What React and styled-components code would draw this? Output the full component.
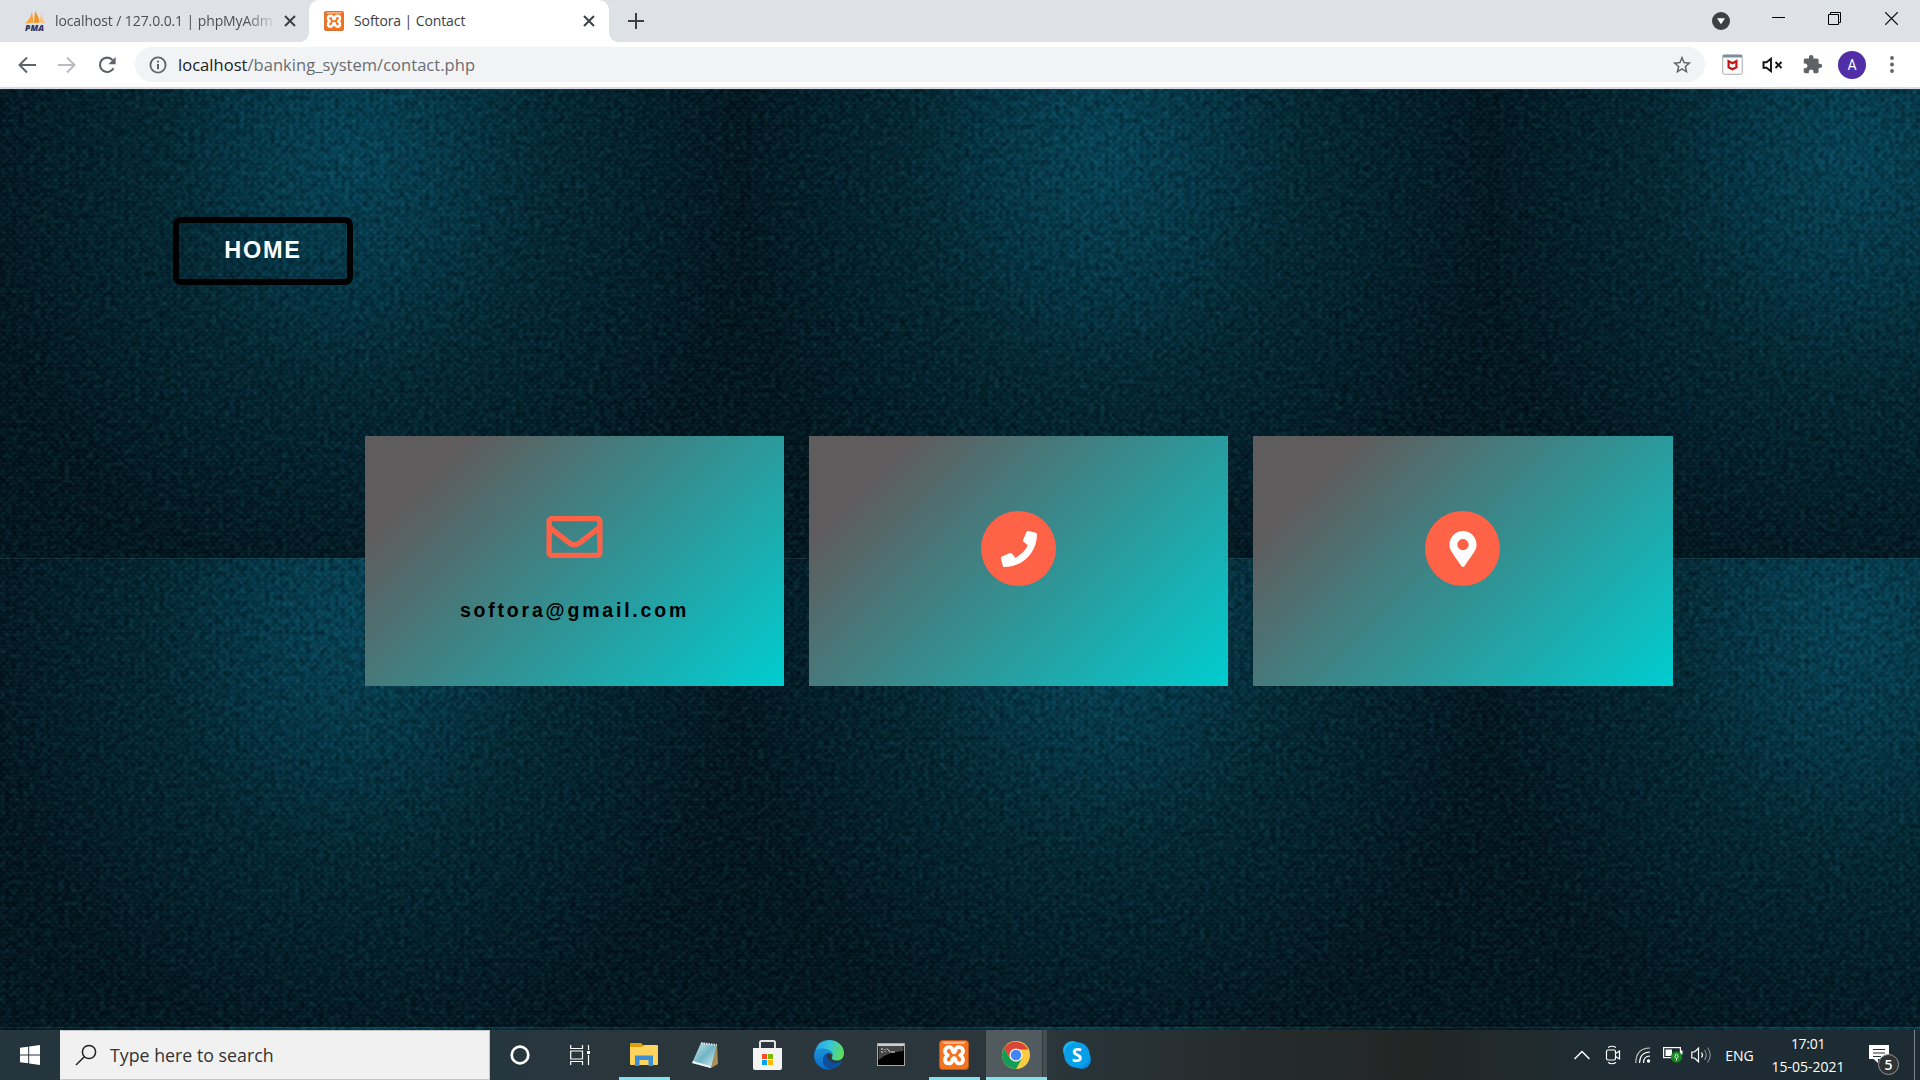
import React from "react";
import styled, { createGlobalStyle } from "styled-components";
import { FaRegEnvelope, FaPhone, FaMapMarkerAlt } from "react-icons/fa";
import { MdExtension, MdStarBorder } from "react-icons/md";

const Global = createGlobalStyle`
  * { box-sizing: border-box; }
  html, body { margin: 0; padding: 0; overflow: hidden; }
  body { font-family: "Open Sans", "Noto Sans", sans-serif; }
  svg { display: block; flex: none; }
`;

const Screen = styled.div`
  display: flex;
  flex-direction: column;
  width: 1920px;
  height: 1080px;
  overflow: hidden;
`;

/* ---------- browser ---------- */
const TabStrip = styled.div`
  display: flex;
  height: 42px;
  background: #dee1e6;
`;
const Tab = styled.div`
  display: flex;
  align-items: center;
  width: ${(p) => p.$width}px;
  padding: 0 ${(p) => p.$right}px 0 ${(p) => p.$left}px;
  color: ${(p) => (p.$active ? "#3c4043" : "#4b4f54")};
  background: ${(p) => (p.$active ? "#fff" : "transparent")};
  border-radius: 10px 10px 0 0;
  position: relative;
  &::before, &::after {
    content: "";
    display: ${(p) => (p.$active ? "block" : "none")};
    position: absolute;
    bottom: 0;
    width: 9px;
    height: 9px;
  }
  &::before { left: -9px; background: radial-gradient(circle at 0 0, transparent 8.5px, #fff 9px); }
  &::after { right: -9px; background: radial-gradient(circle at 100% 0, transparent 8.5px, #fff 9px); }
`;
const TabTitle = styled.div`
  width: ${(p) => p.$width}px;
  margin: 0 auto 1px 10px;
  white-space: nowrap;
  font-size: 14px;
  line-height: 22px;
  letter-spacing: -0.1px;
  ${(p) => p.$fade && "mask-image: linear-gradient(90deg, #000 190px, transparent 222px);"}
`;
const NewTab = styled.div`
  display: flex;
  align-items: center;
  justify-content: center;
  width: 54px;
`;
const WindowButtons = styled.div`
  display: flex;
  margin-left: auto;
`;
const WindowButton = styled.div`
  display: flex;
  justify-content: center;
  width: 56.6px;
  padding: ${(p) => p.$top}px 1px 0 0;
`;
const Toolbar = styled.div`
  display: flex;
  align-items: center;
  height: 47px;
  padding: 0 8px 0 7px;
  background: #fff;
  border-bottom: 2px solid #d9dbde;
`;
const ToolButton = styled.div`
  display: flex;
  align-items: center;
  justify-content: center;
  width: 40px;
  height: 40px;
`;
const Omnibox = styled.div`
  display: flex;
  align-items: center;
  flex: 1;
  height: 35px;
  margin: 0 7px 0 8px;
  padding: 0 12px 0 14px;
  border-radius: 18px;
  background: #f1f3f4;
`;
const Url = styled.div`
  flex: 1;
  padding-left: 11px;
  font-size: 16.5px;
  line-height: 24px;
  letter-spacing: 0.04px;
  color: #696d72;
  b { font-weight: 400; color: #202124; }
`;
const Avatar = styled.div`
  display: flex;
  align-items: center;
  justify-content: center;
  width: 28px;
  height: 28px;
  border-radius: 50%;
  background: #512da8;
  color: #fff;
  font: 14px Roboto, sans-serif;
`;

/* ---------- page ---------- */
const Page = styled.main`
  position: relative;
  isolation: isolate;
  height: 941px;
  padding-top: 128px;
  background-color: #01141c;
  background-image:
    radial-gradient(ellipse 2.6px 1.7px at 50% 50%, rgba(90, 190, 205, 0.1), transparent),
    radial-gradient(ellipse 2.6px 1.7px at 50% 50%, rgba(90, 190, 205, 0.08), transparent),
    radial-gradient(ellipse 2px 3px at 50% 50%, rgba(0, 5, 12, 0.22), transparent),
    linear-gradient(180deg, rgba(80, 95, 100, 0.28) 1px, transparent 1px),
    radial-gradient(ellipse 200px 250px at 350px 60px, rgba(6, 80, 104, 0.62) 0%, rgba(5, 74, 98, 0.44) 40%, rgba(4, 62, 83, 0.14) 78%, rgba(3, 60, 80, 0) 100%),
    radial-gradient(ellipse 390px 450px at 360px 60px, #033443 0%, #022a36 40%, #011c27 75%, #01121a 100%);
  background-size: 7px 7px, 7px 7px, 7px 7px, 750px 469px, 750px 469px, 750px 469px;
  background-position: 0 0, 3.5px 3.5px, 4px 0, 0 0, 0 0, 0 0;
`;
const Weave = styled.svg`
  position: absolute;
  inset: 0;
  z-index: -1;
`;
const HomeLink = styled.a`
  display: flex;
  align-items: center;
  justify-content: center;
  width: 180px;
  height: 68px;
  margin-left: 173px;
  border: 6px solid #000;
  border-radius: 8px;
  color: #fff;
  font: bold 23.5px "Liberation Sans", Arial, sans-serif;
  letter-spacing: 1.8px;
  padding-bottom: 1px;
`;
const Cards = styled.section`
  display: grid;
  grid-template-columns: 419px 419px 420px;
  gap: 25px;
  margin: 151px 0 0 365px;
`;
const Card = styled.article`
  display: flex;
  flex-direction: column;
  align-items: center;
  height: 250px;
  padding-top: 75px;
  background: linear-gradient(135deg, #5f5c5d 16%, #00cdd0 100%);
  &:last-child { padding-right: 1px; }
`;
const MailIcon = styled(FaRegEnvelope)`
  width: 57px;
  height: 56px;
  margin-top: -2px;
  color: tomato;
`;
const Round = styled.div`
  display: flex;
  align-items: center;
  justify-content: center;
  width: 75px;
  height: 75px;
  border-radius: 50%;
  background: tomato;
  color: #fff;
  font-size: 36px;
`;
const Mail = styled.p`
  margin: 33px 0 0;
  font: bold 19.5px/25px "Liberation Sans", Arial, sans-serif;
  letter-spacing: 2.8px;
  color: #000;
`;

/* ---------- taskbar ---------- */
const Taskbar = styled.footer`
  display: flex;
  height: 50px;
  color: #fff;
  background: linear-gradient(90deg, #25353d 0, #26363d 480px, #2b373c 760px, #2a363b 1040px, #252b2c 1250px, #222625 1420px, #1f2c32 1580px, #1d2b32 1920px);
`;
const Cell = styled.div`
  display: flex;
  align-items: center;
  justify-content: center;
  width: ${(p) => p.$width}px;
`;
const Search = styled.div`
  display: flex;
  align-items: center;
  width: 430px;
  padding-left: 14px;
  gap: 13px;
  border: 1px solid #c2c4c5;
  border-left-color: #f1f1f1;
  background: #f1f1f1;
  color: #333;
  font-size: 17.8px;
`;
const AppButton = styled.div`
  display: flex;
  align-items: center;
  justify-content: center;
  width: 62px;
  padding: 2px 2px 0 0;
  border-bottom: 3px solid transparent;
  ${(p) => p.$running && `
    width: 51px;
    margin: 0 5px 0 6px;
    border-bottom-color: #85e0ef;
  `}
  ${(p) => p.$current && `
    width: 61px;
    margin: 0 0 0 1px;
    padding-right: 1px;
    border-bottom-color: #85e0ef;
    background: linear-gradient(90deg, #515b5f 56px, #30393d 56px, #30393d 57px, #444e52 57px);
  `}
`;
const Tray = styled.div`
  display: flex;
  align-items: center;
  margin-left: auto;
`;
const Language = styled.div`
  width: 47px;
  text-align: center;
  font-size: 14px;
  padding-left: 2px;
`;
const Clock = styled.div`
  width: 94px;
  text-align: center;
  font-size: 14px;
  line-height: 23px;
  padding: 0 2px 1px 0;
  white-space: nowrap;
  span { display: block; }
  span:first-child { letter-spacing: -0.3px; }
`;
const Notifications = styled.div`
  position: relative;
  width: 58px;
  height: 50px;
  padding: 15px 0 0 13px;
`;
const Badge = styled.div`
  position: absolute;
  left: 22px;
  top: 24px;
  width: 21px;
  height: 21px;
  border: 1px solid #92999c;
  border-radius: 50%;
  background: #303234;
  text-align: center;
  font-size: 14px;
  font-weight: 600;
  line-height: 19px;
`;
const ShowDesktop = styled.div`
  width: 6px;
  height: 50px;
  border-left: 1px solid #7b8488;
`;

const Cross = ({ size, width, color }) => (
  <svg width={size} height={size} viewBox="0 0 12 12" stroke={color} strokeWidth={width}>
    <path d="M1 1L11 11M11 1L1 11" />
  </svg>
);

/* woven cloth grain over the page background */
const ClothTexture = () => (
  <Weave width="1920" height="941">
    <filter id="lightThreads" x="0" y="0" width="100%" height="100%" colorInterpolationFilters="sRGB">
      <feTurbulence type="fractalNoise" baseFrequency="0.17 0.23" numOctaves="1" seed="4" />
      <feColorMatrix values="0 0 0 0 0.2  0 0 0 0 0.55  0 0 0 0 0.62  0.4 0 0 0 -0.15" />
    </filter>
    <filter id="darkThreads" x="0" y="0" width="100%" height="100%" colorInterpolationFilters="sRGB">
      <feTurbulence type="fractalNoise" baseFrequency="0.2 0.17" numOctaves="1" seed="9" />
      <feColorMatrix values="0 0 0 0 0  0 0 0 0 0.02  0 0 0 0 0.05  0 0.9 0 0 -0.33" />
    </filter>
    <rect width="1920" height="941" filter="url(#lightThreads)" />
    <rect width="1920" height="941" filter="url(#darkThreads)" />
  </Weave>
);

const PmaIcon = () => (
  <svg width="20" height="20" viewBox="0 0 20 20">
    <path d="M0 12.5Q5 9 7 1L8.5 11.5Z" fill="#f9a13a" />
    <path d="M9 12L10 0Q14 6 14.5 11.5Z" fill="#f7941d" />
    <path d="M15 11.5L15.5 3Q18 8 20 12.5Z" fill="#fbc27a" />
    <text x="0" y="19.5" textLength="19" fontSize="8.5" fontWeight="800" fontStyle="italic" fontFamily="Open Sans, sans-serif" fill="#33335f">PMA</text>
  </svg>
);

const XamppIcon = ({ size }) => (
  <svg width={size} height={size} viewBox="0 0 30 30">
    <rect x=".5" y=".5" width="29" height="29" rx="3" fill="#f37321" stroke="#b8541a" />
    <path d="M3 1.5H27L25 4H5Z" fill="#f8b183" />
    <path
      d="M15 12.500C14 12.500 13.800 11.500 13.500 10C13 8 12 7.200 10 7.200C7.500 7.200 6 9 6 11.200C6 13 7 14 8.800 15.200C6.800 16.500 6 17.800 6 19.500C6 22 7.500 23.500 9.800 23.500C12 23.500 13 22.300 13.500 20C13.800 18.500 14 18 15 18C16 18 16.200 18.500 16.500 20C17 22.300 18 23.500 20.200 23.500C22.500 23.500 24 22 24 19.500C24 17.800 23.200 16.500 21.200 15.200C23 14 24 13 24 11.200C24 9 22.500 7.200 20 7.200C18 7.200 17 8 16.500 10C16.200 11.500 16 12.500 15 12.500Z"
      fill="none" stroke="#fff" strokeWidth="3.700" strokeLinejoin="round"
    />
  </svg>
);

const BackIcon = ({ flip, color }) => (
  <svg width="18" height="18" viewBox="0 0 18 18" fill="none" stroke={color} strokeWidth="2">
    <path d={flip ? "M0 9H16M9 1.500L16.500 9L9 16.500" : "M18 9H2M9 1.500L1.500 9L9 16.500"} />
  </svg>
);

const ReloadIcon = () => (
  <svg width="18" height="18" viewBox="0 0 18 18">
    <path d="M15.500 12.200A7.200 7.200 0 1 1 14.500 4" fill="none" stroke="#5f6368" strokeWidth="2.100" />
    <path d="M17.600 1V8.200H10.400Z" fill="#5f6368" />
  </svg>
);

const InfoIcon = () => (
  <svg width="18" height="18" viewBox="0 0 18 18" fill="none" stroke="#5f6368">
    <circle cx="9" cy="9" r="7.600" strokeWidth="1.800" />
    <path d="M9 8V13.300M9 4.700V6.500" strokeWidth="2" />
  </svg>
);

const ShieldIcon = () => (
  <svg width="21" height="21" viewBox="0 0 21 21">
    <rect x=".7" y=".7" width="19.600" height="19.600" rx="1.500" fill="#fafafa" stroke="#adb0b3" />
    <path d="M1 1H20V3.500H1Z" fill="#78909c" />
    <path d="M6.600 7.200L10.500 9.300L14.400 7.200V13.300L10.500 15.300L6.600 13.300Z" fill="none" stroke="#c01818" strokeWidth="2.200" />
  </svg>
);

const MutedIcon = () => (
  <svg width="21" height="16" viewBox="0 0 21 16" fill="none" stroke="#111" strokeWidth="1.900">
    <path d="M1.500 5.300H4.500L9 1.800V14.200L4.500 10.700H1.500Z" />
    <path d="M13.500 5L19.500 11M19.500 5L13.500 11" />
  </svg>
);

const WindowsIcon = () => (
  <svg width="20" height="20" viewBox="0 0 20 20" fill="#fff">
    <path d="M0 2.800L8.200 1.700V9.500H0ZM9.200 1.500L20 0V9.500H9.200ZM0 10.500H8.200V18.300L0 17.200ZM9.200 10.500H20V20L9.200 18.500Z" />
  </svg>
);

const SearchIcon = () => (
  <svg width="22" height="22" viewBox="0 0 22 22" fill="none" stroke="#222" strokeWidth="1.500">
    <circle cx="14" cy="8" r="6.600" />
    <path d="M9.300 12.700L1 21" />
  </svg>
);

const TaskViewIcon = () => (
  <svg width="20" height="20" viewBox="0 0 20 20" fill="none" stroke="#fff" strokeWidth="1.200">
    <path d="M.7 0V3.500H12.500V0M.7 20V16.500H12.500V20M.7 6H12.500V14H.7ZM18.500 0V5M18.500 10V20" />
    <rect x="17" y="6" width="3" height="3" fill="#fff" stroke="none" />
  </svg>
);

const ExplorerIcon = () => (
  <svg width="28" height="24" viewBox="0 0 28 24">
    <path d="M0 1Q0 0 1 0H11L14 3V8H0Z" fill="#dea00c" />
    <path d="M0 4H12L14 2H27Q28 2 28 3V21Q28 22 27 22H1Q0 22 0 21Z" fill="#ffd45c" />
    <path d="M5 23V12.500H23V23H18.500V17H9.500V23Z" fill="#3a8fd6" />
  </svg>
);

const NotepadIcon = () => (
  <svg width="28" height="28" viewBox="0 0 28 28">
    <defs>
      <linearGradient id="pad" x1="0" y1="0" x2="1" y2="1">
        <stop offset="0" stopColor="#d3eef2" /><stop offset=".5" stopColor="#6fb4c4" /><stop offset="1" stopColor="#e4f4f6" />
      </linearGradient>
    </defs>
    <path d="M26 4L27 23L20 27Z" fill="#a98f52" />
    <path d="M10 2L26 4L20 27L1 22Z" fill="url(#pad)" />
    <path d="M1 22L20 27L19 25L2 20Z" fill="#f1f6f6" />
    <path d="M10 2L26 4" stroke="#ddd" strokeWidth="2" strokeDasharray="1.500 1" />
  </svg>
);

const StoreIcon = () => (
  <svg width="29" height="30" viewBox="0 0 29 30">
    <path d="M7 10V2.500Q7 1 8.500 1H20.500Q22 1 22 2.500V10" fill="none" stroke="#e2e2e2" strokeWidth="2" />
    <path d="M0 8H29V28Q29 30 27 30H2Q0 30 0 28Z" fill="#f3f3f3" />
    <rect x="9" y="14" width="5" height="5" fill="#f25022" />
    <rect x="15" y="14" width="5" height="5" fill="#7fba00" />
    <rect x="9" y="20" width="5" height="5" fill="#00a4ef" />
    <rect x="15" y="20" width="5" height="5" fill="#ffb900" />
  </svg>
);

const EdgeIcon = () => (
  <svg width="30" height="30" viewBox="0 0 30 30">
    <defs>
      <linearGradient id="edgeTop" x1="0" y1=".4" x2="1" y2=".6">
        <stop offset="0" stopColor="#2aa5e0" /><stop offset=".45" stopColor="#34c5df" /><stop offset="1" stopColor="#62de4e" />
      </linearGradient>
      <linearGradient id="edgeSide" x1="0" y1="0" x2="0" y2="1">
        <stop offset="0" stopColor="#1b95dc" /><stop offset="1" stopColor="#0867c6" />
      </linearGradient>
    </defs>
    <path d="M1 11Q4 0 15 0C24 0 30 6 30 13C30 18 27 20.500 23 20.500C19 20.500 17 19 18 17C19.500 15 18 11 13 9.500Q6 8 1 11Z" fill="url(#edgeTop)" />
    <path d="M0 15C0 10 5 7.500 10 8.500C15 9.500 18.500 12 18.500 15C15 11 9 14 9 20C9 25 13 28.500 18 29.500C8 31.500 0 24 0 15Z" fill="url(#edgeSide)" />
    <path d="M13 13.500C8 16 8 23 12 27C17 31 25 28 28 22C28.500 21 28 20.500 27 21C20 25 13 21 13 15.500Z" fill="#0c4f9c" />
  </svg>
);

const TerminalIcon = () => (
  <svg width="28" height="23" viewBox="0 0 28 23">
    <rect x=".5" y=".5" width="27" height="22" fill="#000" stroke="#a6a6a6" />
    <path d="M1 1H27V3H1Z" fill="#c8d0d4" />
    <path d="M1.500 3H26.500V8Q10 9 1.500 17Z" fill="#454545" />
    <path d="M4 6H6M4 9H6M8 6V7M8 8V9M10 5.500L13 9M13.500 9H18" stroke="#ddd" fill="none" />
  </svg>
);

const ChromeIcon = () => (
  <svg width="28" height="28" viewBox="0 0 28 28">
    <circle cx="14" cy="14" r="14" fill="#fbcb3f" />
    <path d="M1.900 7A14 14 0 0 1 26.100 8.500H14L8 17.500Z" fill="#db4437" />
    <path d="M1.900 7A14 14 0 0 0 14 28L20 17.500L14 20.500L8 17.500Z" fill="#0f9d58" />
    <circle cx="14" cy="14" r="6.600" fill="#f1f1f1" />
    <circle cx="14" cy="14" r="5.200" fill="#4285f4" />
  </svg>
);

const SkypeIcon = () => (
  <svg width="28" height="28" viewBox="0 0 28 28">
    <circle cx="9.500" cy="9.500" r="9.500" fill="#1ab6f2" />
    <circle cx="18.500" cy="18.500" r="9.500" fill="#0a8be0" />
    <circle cx="14" cy="14" r="12.800" fill="#079fe9" />
    <text x="14" y="21" textAnchor="middle" fontSize="19" fontWeight="700" fontFamily="Open Sans, sans-serif" fill="#fff">S</text>
  </svg>
);

const CameraIcon = () => (
  <svg width="16" height="20" viewBox="0 0 16 20" fill="none" stroke="#fff" strokeWidth="1.200">
    <rect x="1.500" y="5" width="9" height="10" rx="1.500" />
    <path d="M10.500 8.500L14.500 6V14L10.500 11.500M3 2.500Q7 0 11 2.500M3 17.500Q7 20 11 17.500" />
  </svg>
);

const WifiIcon = () => (
  <svg width="16" height="16" viewBox="0 0 16 16" fill="none" stroke="#fff" strokeWidth="1.200">
    <path d="M.8 16Q1 1 15 1" opacity=".75" />
    <path d="M4.500 16Q5 5 15 5M8.500 16Q8.500 9 15 9" />
    <circle cx="13.500" cy="14" r="1.700" fill="#fff" stroke="none" />
  </svg>
);

const BatteryIcon = () => (
  <svg width="20" height="16" viewBox="0 0 20 16">
    <rect x=".6" y=".6" width="16.800" height="10" fill="none" stroke="#fff" strokeWidth="1.200" />
    <path d="M2.500 2.500H9V9H2.500ZM18 3.500H19.500V7.500H18Z" fill="#fff" />
    <circle cx="13.500" cy="10" r="5.600" fill="#128a1c" />
    <path d="M13.500 6.800C15.500 9 15.500 10.500 13.500 11.800C11.500 10.500 11.500 9 13.500 6.800M13.500 11V13.500" stroke="#fff" fill="none" />
  </svg>
);

const VolumeIcon = () => (
  <svg width="21" height="18" viewBox="0 0 21 18" fill="none" stroke="#fff" strokeWidth="1.200">
    <path d="M.8 6H3.500L7.500 2.200V15.800L3.500 12H.8Z" />
    <path d="M10.500 6.500Q12.500 9 10.500 11.500" />
    <path d="M13.500 4Q17 9 13.500 14M16.500 1.500Q22 9 16.500 16.500" opacity=".45" />
  </svg>
);

const apps = [
  { icon: <ExplorerIcon />, running: true },
  { icon: <NotepadIcon /> },
  { icon: <StoreIcon /> },
  { icon: <EdgeIcon /> },
  { icon: <TerminalIcon /> },
  { icon: <XamppIcon size={30} />, running: true },
  { icon: <ChromeIcon />, current: true },
  { icon: <SkypeIcon /> },
];

export default function App() {
  return (
    <Screen>
      <Global />
      <TabStrip>
        <Tab $width={309} $left={25} $right={13}>
          <PmaIcon />
          <TabTitle $width={226} $fade>localhost / 127.0.0.1 | phpMyAdm</TabTitle>
          <Cross size={12} width={2} color="#3c4043" />
        </Tab>
        <Tab $active $width={300} $left={15} $right={14}>
          <XamppIcon size={20} />
          <TabTitle $width={200}>Softora | Contact</TabTitle>
          <Cross size={12} width={2} color="#3c4043" />
        </Tab>
        <NewTab>
          <svg width="16" height="16" viewBox="0 0 16 16" stroke="#3c4043" strokeWidth="2"><path d="M8 0V16M0 8H16" /></svg>
        </NewTab>
        <WindowButtons>
          <WindowButton $top={12}>
            <svg width="18" height="18" viewBox="0 0 18 18">
              <circle cx="9" cy="9" r="9" fill="#3c4043" /><path d="M5 6.300H13L9 12.300Z" fill="#fff" />
            </svg>
          </WindowButton>
          <WindowButton $top={17}>
            <svg width="13" height="1"><rect width="13" height="1" fill="#000" /></svg>
          </WindowButton>
          <WindowButton $top={12}>
            <svg width="13" height="13" viewBox="0 0 13 13" fill="none" stroke="#000">
              <path d="M.5 2.500H10.500V12.500H.5ZM2.500 2.500V.5H12.500V10.500H10.500" />
            </svg>
          </WindowButton>
          <WindowButton $top={11}><Cross size={15} width={0.9} color="#111" /></WindowButton>
        </WindowButtons>
      </TabStrip>
      <Toolbar>
        <ToolButton><BackIcon color="#5f6368" /></ToolButton>
        <ToolButton><BackIcon flip color="#b9bbbe" /></ToolButton>
        <ToolButton><ReloadIcon /></ToolButton>
        <Omnibox>
          <InfoIcon />
          <Url><b>localhost</b>/banking_system/contact.php</Url>
          <MdStarBorder size={22} color="#5f6368" />
        </Omnibox>
        <ToolButton><ShieldIcon /></ToolButton>
        <ToolButton><MutedIcon /></ToolButton>
        <ToolButton><MdExtension size={21} color="#5f6368" /></ToolButton>
        <ToolButton><Avatar>A</Avatar></ToolButton>
        <ToolButton>
          <svg width="4" height="17" viewBox="0 0 4 17" fill="#5f6368">
            <circle cx="2" cy="2" r="1.900" /><circle cx="2" cy="8.500" r="1.900" /><circle cx="2" cy="15" r="1.900" />
          </svg>
        </ToolButton>
      </Toolbar>

      <Page>
        <ClothTexture />
        <HomeLink>HOME</HomeLink>
        <Cards>
          <Card>
            <MailIcon />
            <Mail>softora@gmail.com</Mail>
          </Card>
          <Card><Round><FaPhone /></Round></Card>
          <Card><Round><FaMapMarkerAlt /></Round></Card>
        </Cards>
      </Page>

      <Taskbar>
        <Cell $width={60}><WindowsIcon /></Cell>
        <Search><SearchIcon />Type here to search</Search>
        <Cell $width={60}>
          <svg width="20" height="20" viewBox="0 0 20 20"><circle cx="10" cy="10" r="8.300" fill="none" stroke="#fff" strokeWidth="2.700" /></svg>
        </Cell>
        <Cell $width={60}><TaskViewIcon /></Cell>
        <Cell $width={3} />
        {apps.map((app, i) => (
          <AppButton key={i} $running={app.running} $current={app.current}>{app.icon}</AppButton>
        ))}
        <Tray>
          <Cell $width={30}>
            <svg width="16" height="10" viewBox="0 0 16 10" fill="none" stroke="#fff" strokeWidth="1.500"><path d="M.5 9L8 1.500L15.500 9" /></svg>
          </Cell>
          <Cell $width={31}><CameraIcon /></Cell>
          <Cell $width={30}><WifiIcon /></Cell>
          <Cell $width={30}><BatteryIcon /></Cell>
          <Cell $width={27}><VolumeIcon /></Cell>
          <Language>ENG</Language>
          <Clock><span>17:01</span><span>15-05-2021</span></Clock>
          <Notifications>
            <svg width="20" height="18" viewBox="0 0 20 18">
              <path d="M0 0H20V14H9V18L4.500 14H0Z" fill="#fff" />
              <path d="M4 4.500H16M4 8H16M4 11.500H12" stroke="#26343a" strokeWidth="1.200" />
            </svg>
            <Badge>5</Badge>
          </Notifications>
          <ShowDesktop />
        </Tray>
      </Taskbar>
    </Screen>
  );
}
